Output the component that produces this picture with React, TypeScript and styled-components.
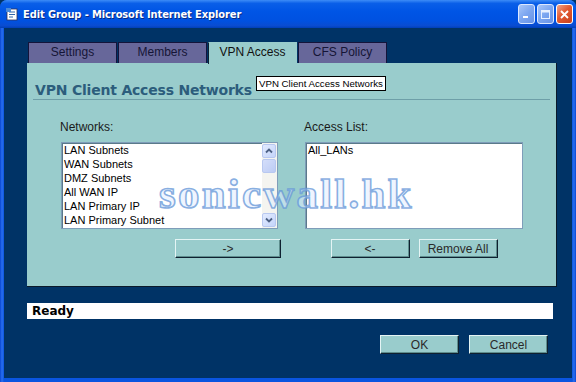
import styled, { createGlobalStyle } from "styled-components";

const GlobalStyle = createGlobalStyle`
  html, body {
    margin: 0;
    padding: 0;
    background: #003366;
  }
  body {
    font-family: "Liberation Sans", Arial, sans-serif;
  }
`;

const Window = styled.div`
  width: 576px;
  height: 382px;
  display: flex;
  flex-direction: column;
  background: linear-gradient(90deg, #0846d0 0px, #2a6ff0 2px, #0a55e0 4px, #0a55e0 572px, #2a6ff0 574px, #0846d0 576px);
  border-radius: 7px 7px 0 0;
  overflow: hidden;
`;

const TitleBar = styled.div`
  height: 28px;
  flex: none;
  display: flex;
  align-items: center;
  padding: 0 3px 0 5px;
  background: linear-gradient(180deg, #3d8cf7 0%, #0a5fe8 12%, #0055e5 40%, #0051e0 75%, #0a4cd0 92%, #003fb8 100%);
  color: #fff;
`;

const TitleIcon = styled.svg`
  width: 14px;
  height: 14px;
  flex: none;
  margin-right: 4px;
`;

const TitleText = styled.div`
  flex: 1;
  font-family: "DejaVu Sans Condensed", "DejaVu Sans", sans-serif;
  font-weight: bold;
  font-size: 11px;
  letter-spacing: -0.1px;
  text-shadow: 1px 1px 0 #0a2a80;
`;

const CaptionButton = styled.div<{ $close?: boolean }>`
  width: 17px;
  height: 20px;
  margin-left: 2px;
  box-sizing: border-box;
  border: 1px solid ${(p) => (p.$close ? "#fff" : "#dce8ff")};
  border-radius: 3px;
  display: flex;
  align-items: center;
  justify-content: center;
  background: ${(p) =>
    p.$close
      ? "linear-gradient(135deg, #f2a58a 0%, #e25a32 45%, #c8401c 100%)"
      : "linear-gradient(135deg, #a8c6f8 0%, #7ca6f0 50%, #6892e6 100%)"};
`;

const Body = styled.div`
  flex: 1;
  margin: 0 4px 4px;
  background: #003366;
  padding: 14px 15px 0 23px;
  display: flex;
  flex-direction: column;
`;

const Tabs = styled.div`
  display: flex;
  margin-left: 1px;
  height: 21px;
`;

const Tab = styled.div<{ $active?: boolean }>`
  width: 89px;
  box-sizing: border-box;
  margin-right: 1px;
  border: 1px solid #14143a;
  border-bottom: none;
  background: ${(p) => (p.$active ? "#99cccc" : "#67679a")};
  color: ${(p) => (p.$active ? "#111" : "#151536")};
  font-size: 12px;
  text-align: center;
  line-height: 18px;
  position: relative;
  z-index: ${(p) => (p.$active ? 2 : 0)};
  height: ${(p) => (p.$active ? "22px" : "21px")};
  ${(p) => (p.$active ? "border-color: #99cccc; border-left-color: #0d2033;" : "")}
`;

const Panel = styled.div`
  position: relative;
  height: 224px;
  background: #99cccc;
  border-right: 1px solid #0a1a2a;
  border-bottom: 1px solid #0a1a2a;
  box-sizing: border-box;
  padding: 19px 6px 0 8px;
`;

const Heading = styled.div`
  font-family: "DejaVu Sans", Verdana, sans-serif;
  font-weight: bold;
  font-size: 14px;
  letter-spacing: -0.2px;
  color: #2c5d7c;
  padding-bottom: 1px;
  border-bottom: 1px solid #6e9fa8;
  margin-left: -2px;
  padding-left: 2px;
`;

const Tooltip = styled.div`
  position: absolute;
  left: 229px;
  top: 13px;
  height: 15px;
  box-sizing: border-box;
  padding: 0 2px;
  background: #fff;
  border: 1px solid #000;
  font-size: 9.7px;
  line-height: 13px;
  color: #000;
  white-space: nowrap;
`;

const Columns = styled.div`
  display: grid;
  grid-template-columns: 217px 218px;
  column-gap: 27px;
  margin-left: 26px;
  margin-top: 20px;
`;

const Label = styled.div`
  font-size: 12px;
  color: #1a1a1a;
  margin-left: -1px;
  height: 22px;
`;

const ListBox = styled.div`
  height: 87px;
  box-sizing: border-box;
  background: #fff;
  border: 1px solid #7f9db9;
  box-shadow: inset 1px 1px 0 #5a7a8a;
  display: flex;
`;

const Items = styled.div`
  flex: 1;
  padding: 0 0 0 2px;
  font-size: 11px;
  line-height: 14px;
  color: #000;
`;

const ScrollBar = styled.div`
  width: 14px;
  display: flex;
  flex-direction: column;
  background: #f4f4f0;
  padding: 1px 1px 1px 0;
`;

const ScrollBtn = styled.div`
  height: 14px;
  box-sizing: border-box;
  border: 1px solid #b8c8f0;
  border-radius: 2px;
  background: linear-gradient(135deg, #e2ebff 0%, #c4d4fa 100%);
  display: flex;
  align-items: center;
  justify-content: center;
`;

const Thumb = styled(ScrollBtn)`
  margin-top: 1px;
  background: linear-gradient(135deg, #d4defa 0%, #bccbf4 100%);
`;

const Track = styled.div`
  flex: 1;
`;

const ButtonRow = styled.div<{ $center?: boolean }>`
  display: flex;
  justify-content: ${(p) => (p.$center ? "center" : "flex-start")};
  gap: 9px;
  margin-top: 10px;
  padding-left: ${(p) => (p.$center ? "0" : "114px")};
`;

const Button = styled.button<{ $w?: number }>`
  width: ${(p) => p.$w ?? 79}px;
  height: 19px;
  flex: none;
  padding: 0;
  margin: 0;
  box-sizing: border-box;
  background: #99cccc;
  border: 1px solid;
  border-color: #e4f4f4 #0f2030 #0f2030 #e4f4f4;
  box-shadow: inset -1px -1px 0 #5e8e8e;
  font-family: "Liberation Sans", Arial, sans-serif;
  font-size: 12px;
  color: #2a2a2a;
`;

const StatusBar = styled.div`
  margin-top: 16px;
  height: 16px;
  width: 526px;
  background: #fff;
  font-family: "DejaVu Sans", Tahoma, sans-serif;
  font-weight: bold;
  font-size: 12px;
  line-height: 16px;
  padding-left: 5px;
  box-sizing: border-box;
  color: #000;
`;

const Footer = styled.div`
  display: flex;
  justify-content: flex-end;
  gap: 10px;
  margin-top: 16px;
  padding-right: 9px;
`;

const Watermark = styled.div`
  position: absolute;
  left: 132px;
  top: 106px;
  font-family: "Liberation Serif", "Times New Roman", serif;
  font-weight: bold;
  font-size: 43px;
  letter-spacing: 2.2px;
  color: rgba(225, 238, 255, 0.55);
  -webkit-text-stroke: 1.6px rgba(100, 150, 215, 0.75);
  pointer-events: none;
  white-space: nowrap;
`;

const Arrow = ({ down }: { down?: boolean }) => (
  <svg width="8" height="6" viewBox="0 0 8 6">
    <path
      d={down ? "M1 1.5 L4 4.5 L7 1.5" : "M1 4.5 L4 1.5 L7 4.5"}
      fill="none"
      stroke="#4d6185"
      strokeWidth="1.8"
    />
  </svg>
);

const networks = [
  "LAN Subnets",
  "WAN Subnets",
  "DMZ Subnets",
  "All WAN IP",
  "LAN Primary IP",
  "LAN Primary Subnet",
];

export default function App() {
  return (
    <Window>
      <GlobalStyle />
      <TitleBar>
        <TitleIcon viewBox="0 0 14 14">
          <rect x="2" y="2" width="10" height="11" fill="#fff" stroke="#335" strokeWidth="0.8" />
          <path d="M4 5h6M4 7.5h6M4 10h4" stroke="#3366aa" strokeWidth="1" />
          <path d="M1 1 L6 1 L6 5 L1 5 Z" fill="#4a8ad8" />
        </TitleIcon>
        <TitleText>Edit Group - Microsoft Internet Explorer</TitleText>
        <CaptionButton>
          <svg width="9" height="9" viewBox="0 0 9 9">
            <rect x="1" y="6" width="5" height="2" fill="#fff" />
          </svg>
        </CaptionButton>
        <CaptionButton>
          <svg width="9" height="9" viewBox="0 0 9 9">
            <rect x="0.5" y="0.5" width="8" height="8" fill="none" stroke="#e8f0ff" strokeWidth="1" />
            <rect x="0.5" y="0.5" width="8" height="2" fill="#e8f0ff" />
          </svg>
        </CaptionButton>
        <CaptionButton $close>
          <svg width="9" height="9" viewBox="0 0 9 9">
            <path d="M1 1 L8 8 M8 1 L1 8" stroke="#fff" strokeWidth="1.8" />
          </svg>
        </CaptionButton>
      </TitleBar>
      <Body>
        <Tabs>
          <Tab>Settings</Tab>
          <Tab>Members</Tab>
          <Tab $active>VPN Access</Tab>
          <Tab>CFS Policy</Tab>
        </Tabs>
        <Panel>
          <Heading>VPN Client Access Networks</Heading>
          <Tooltip>VPN Client Access Networks</Tooltip>
          <Columns>
            <Label>Networks:</Label>
            <Label>Access List:</Label>
            <ListBox>
              <Items>
                {networks.map((n) => (
                  <div key={n}>{n}</div>
                ))}
              </Items>
              <ScrollBar>
                <ScrollBtn>
                  <Arrow />
                </ScrollBtn>
                <Thumb />
                <Track />
                <ScrollBtn>
                  <Arrow down />
                </ScrollBtn>
              </ScrollBar>
            </ListBox>
            <ListBox>
              <Items>
                <div>All_LANs</div>
              </Items>
            </ListBox>
            <ButtonRow>
              <Button $w={106}>-&gt;</Button>
            </ButtonRow>
            <ButtonRow $center>
              <Button>&lt;-</Button>
              <Button>Remove All</Button>
            </ButtonRow>
          </Columns>
          <Watermark>sonicwall.hk</Watermark>
        </Panel>
        <StatusBar>Ready</StatusBar>
        <Footer>
          <Button>OK</Button>
          <Button>Cancel</Button>
        </Footer>
      </Body>
    </Window>
  );
}
